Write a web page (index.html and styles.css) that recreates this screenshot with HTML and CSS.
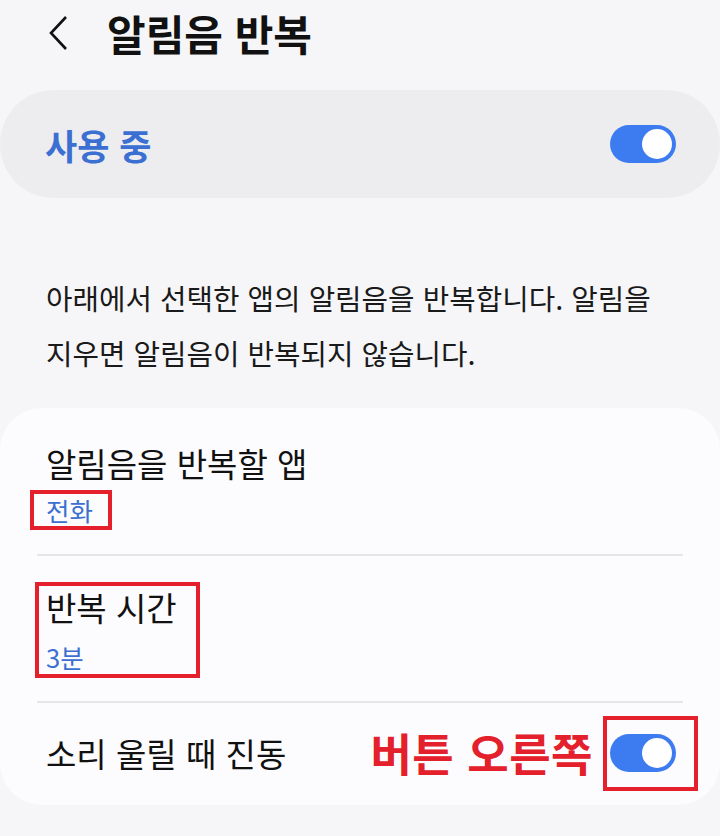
FILE: index.html
```html
<!DOCTYPE html>
<html lang="ko">
<head>
    <meta charset="UTF-8">
    <meta name="viewport" content="width=device-width, initial-scale=1.0">
    <link rel="stylesheet" href="styles.css">
    <title>알림음 반복</title>
</head>
<body>
    <header class="top-bar">
        <a class="back" href="#">
            <svg width="20" height="36" viewBox="0 0 20 36">
                <path d="M17 2 L2 18 L17 34" fill="none" stroke="#111" stroke-width="2.6" stroke-linejoin="miter"/>
            </svg>
        </a>
        <h1>알림음 반복</h1>
    </header>

    <section class="master">
        <span class="master-label">사용 중</span>
        <span class="switch on"><span class="knob"></span></span>
    </section>

    <p class="desc">아래에서 선택한 앱의 알림음을 반복합니다. 알림을 지우면 알림음이 반복되지 않습니다.</p>

    <section class="list">
        <div class="item first">
            <div class="item-title">알림음을 반복할 앱</div>
            <div class="item-sub mark mark-app">전화</div>
        </div>
        <div class="divider"></div>
        <div class="item second">
            <div class="mark mark-time">
                <div class="item-title">반복 시간</div>
                <div class="item-sub">3분</div>
            </div>
        </div>
        <div class="divider"></div>
        <div class="item last">
            <div class="item-title">소리 울릴 때 진동</div>
            <div class="right">
                <span class="note">버튼 오른쪽</span>
                <span class="mark mark-switch">
                    <span class="switch on"><span class="knob"></span></span>
                </span>
            </div>
        </div>
    </section>
</body>
</html>
```

FILE: styles.css
```css
*, body{
    box-sizing: border-box;
    margin: 0;
    padding: 0;
}
body{
    font-family: "Noto Sans CJK KR", "Noto Sans", sans-serif;
    background: #f6f6f9;
    color: #111;
    width: 720px;
    height: 836px;
    overflow: hidden;
}

/* header */
.top-bar{
    display: flex;
    align-items: center;
    height: 66px;
    padding-left: 49px;
}
.back{
    display: flex;
    width: 58px;
}
.top-bar h1{
    font-size: 42px;
    font-weight: 700;
    line-height: 66px;
}

/* master switch card */
.master{
    display: flex;
    align-items: center;
    justify-content: space-between;
    height: 108px;
    margin-top: 24px;
    padding: 0 44px 0 45px;
    background: #ededf0;
    border-radius: 54px;
}
.master-label{
    font-size: 35px;
    font-weight: 700;
    color: #3b6fd2;
}

.switch{
    display: inline-flex;
    justify-content: flex-end;
    align-items: center;
    width: 66px;
    height: 38px;
    padding: 0 4px;
    border-radius: 19px;
    background: #3d7bf1;
}
.knob{
    width: 30px;
    height: 30px;
    border-radius: 50%;
    background: #fff;
}

.desc{
    margin: 72px 40px 0 46px;
    font-size: 28.8px;
    line-height: 55px;
    color: #1a1a1a;
    word-break: keep-all;
}

/* settings list */
.list{
    margin-top: 28px;
    height: 397px;
    background: #fcfcfe;
    border-radius: 42px;
}
.item{
    padding-left: 46px;
}
.item-title{
    font-size: 33px;
    line-height: 40px;
}
.item-sub{
    font-size: 25.5px;
    line-height: 30px;
    color: #3b6fd0;
}
.divider{
    height: 2px;
    margin: 0 37px;
    background: #e6e6e9;
}

.first{
    padding-top: 35px;
    padding-bottom: 24px;
}
.first .item-title{
    margin-bottom: 7px;
}

.second{
    padding-left: 35px;
    padding-top: 26px;
    padding-bottom: 23px;
}

.last{
    display: flex;
    align-items: center;
    justify-content: space-between;
    height: 102px;
    padding-right: 22px;
    padding-bottom: 2px;
}
.right{
    display: flex;
    align-items: center;
}
.note{
    font-size: 45px;
    font-weight: 700;
    line-height: 50px;
    color: #e3202b;
    letter-spacing: 0.5px;
    margin-right: 10px;
}

/* red highlight boxes */
.mark{
    border: 4px solid #e3202b;
}
.mark-app{
    display: inline-block;
    margin-left: -16px;
    padding: 1px 15px 1px 12px;
    line-height: 30px;
}
.mark-time{
    display: inline-block;
    padding: 1px 19px 2px 7px;
}
.mark-time .item-sub{
    margin-top: 15px;
}
.mark-switch{
    display: inline-flex;
    align-items: center;
    height: 75px;
    padding: 0 18px 0 3px;
}
```
